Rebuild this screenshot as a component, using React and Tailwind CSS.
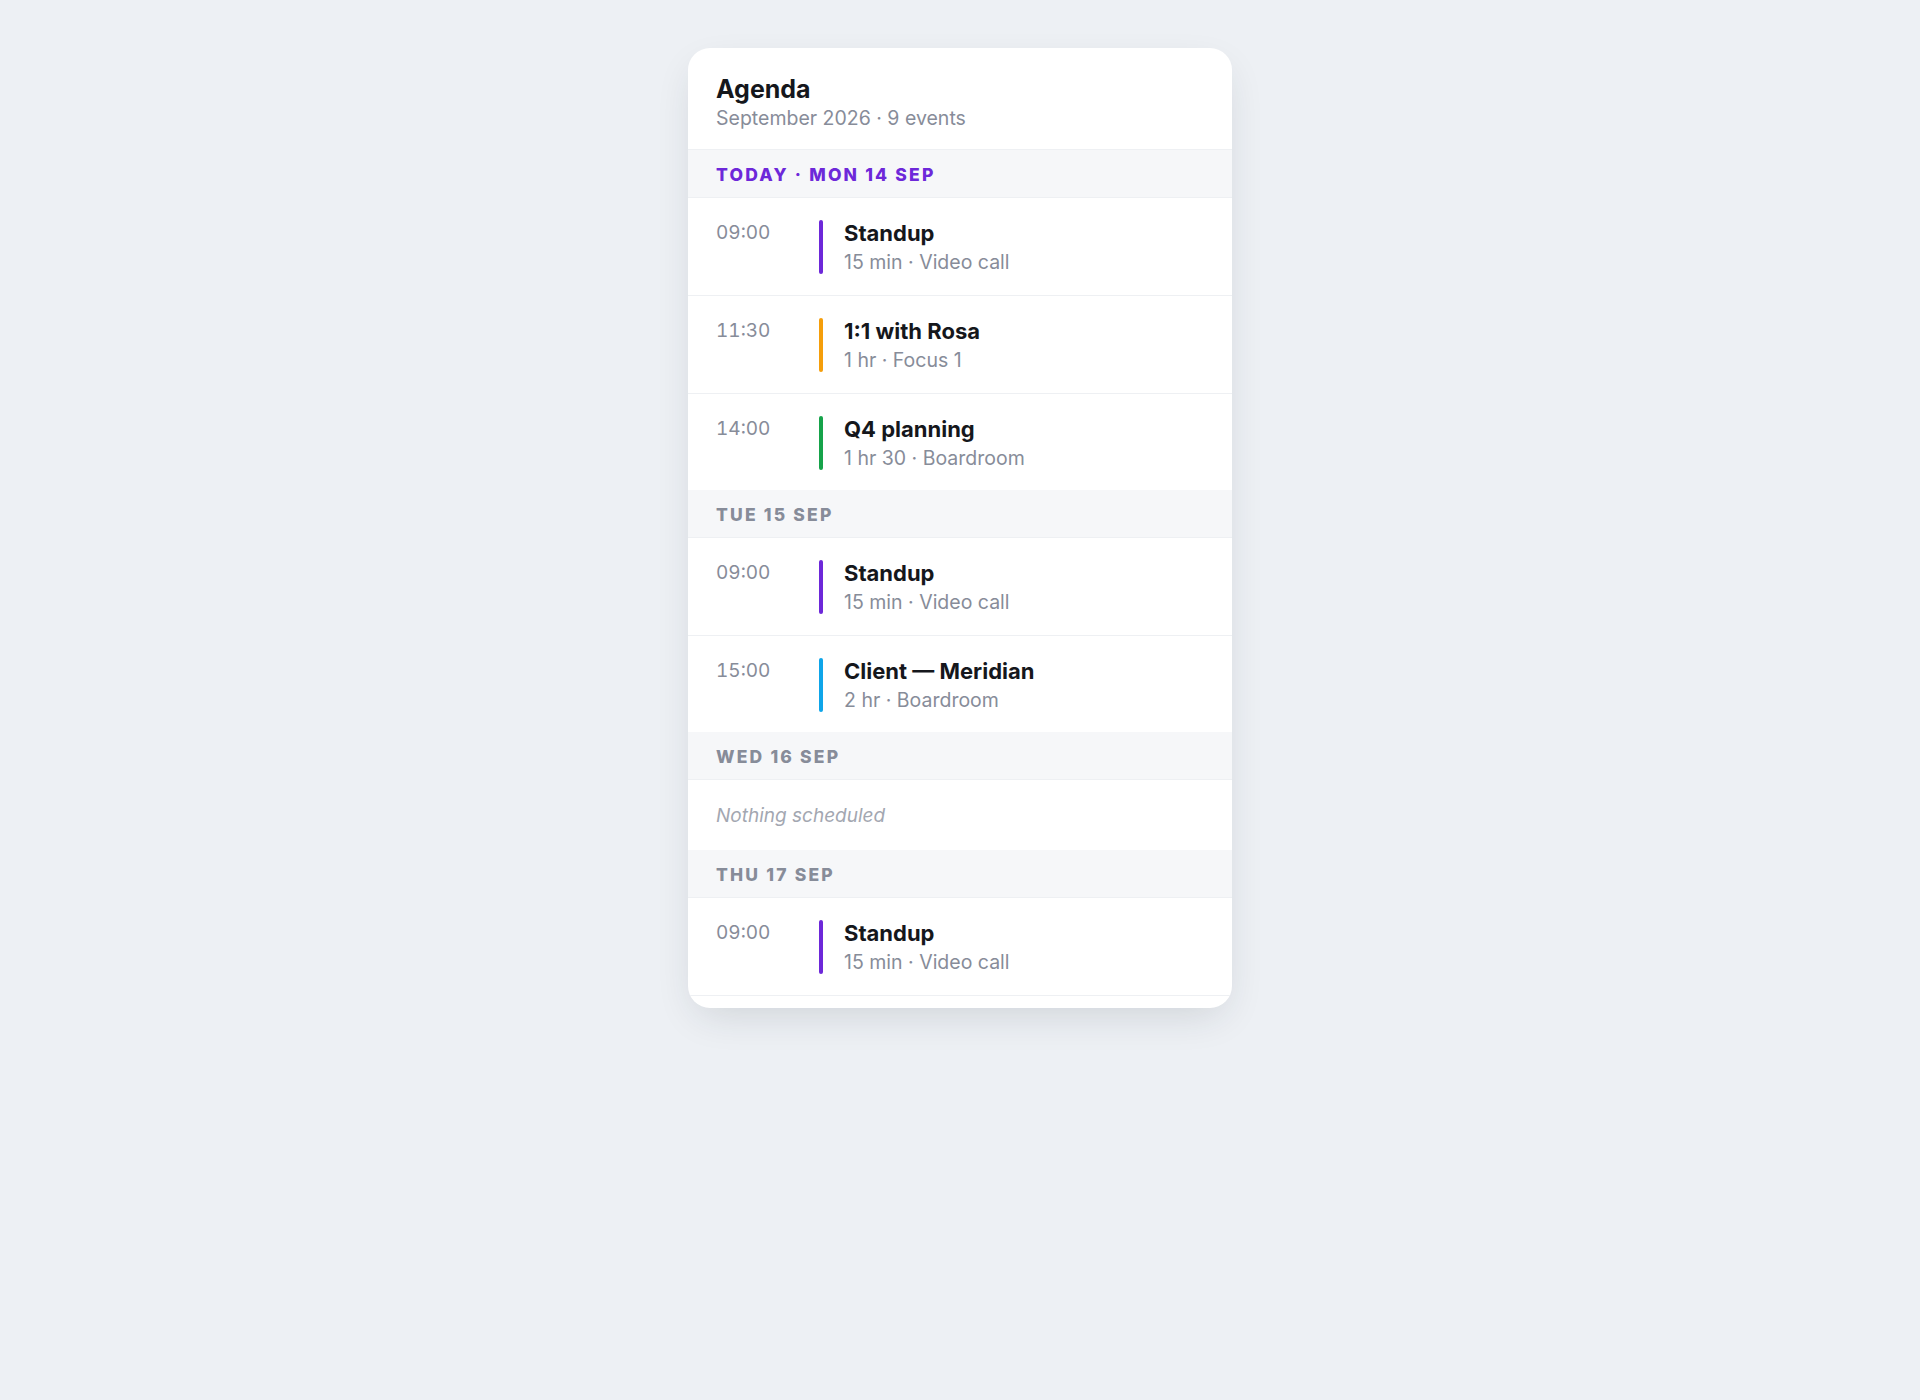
import React from 'react';

const days = [
  {
    label: 'Today · Mon 14 Sep',
    today: true,
    events: [
      { time: '09:00', title: 'Standup', meta: '15 min · Video call', bar: 'bg-[#6d28d9]' },
      { time: '11:30', title: '1:1 with Rosa', meta: '1 hr · Focus 1', bar: 'bg-[#f59e0b]' },
      { time: '14:00', title: 'Q4 planning', meta: '1 hr 30 · Boardroom', bar: 'bg-[#16a34a]' },
    ],
  },
  {
    label: 'Tue 15 Sep',
    events: [
      { time: '09:00', title: 'Standup', meta: '15 min · Video call', bar: 'bg-[#6d28d9]' },
      { time: '15:00', title: 'Client — Meridian', meta: '2 hr · Boardroom', bar: 'bg-[#0ea5e9]' },
    ],
  },
  { label: 'Wed 16 Sep', events: [] },
  {
    label: 'Thu 17 Sep',
    last: true,
    events: [
      { time: '09:00', title: 'Standup', meta: '15 min · Video call', bar: 'bg-[#6d28d9]' },
    ],
  },
];

const EventRow = ({ event, border }) => (
  <div
    className={`flex items-stretch px-7 pt-[22px] ${
      border ? 'pb-[21px] border-b border-[#eef0f3]' : 'pb-[20px]'
    }`}
  >
    <div className="w-[103px] shrink-0 text-[19px] leading-[26px] tabular-nums text-[#878c99]">
      {event.time}
    </div>
    <div className={`w-[4px] shrink-0 rounded-full ${event.bar}`} />
    <div className="ml-[21px] flex flex-col">
      <span className="text-[22px] leading-[26px] font-bold text-[#15171c]">{event.title}</span>
      <span className="pt-[5px] text-[19.5px] leading-[23px] text-[#878c99]">{event.meta}</span>
    </div>
  </div>
);

const DayHeader = ({ label, today }) => (
  <div className="h-[48px] flex items-center pt-[3px] px-7 bg-[#f6f7f9] border-b border-[#eef0f3]">
    <span
      className={`text-[17.5px] leading-[24px] font-extrabold uppercase tracking-[0.125em] ${
        today ? 'text-[#6d28d9]' : 'text-[#878c99]'
      }`}
    >
      {label}
    </span>
  </div>
);

export default function App() {
  return (
    <div className="min-h-[1400px] bg-[#edf0f4] flex justify-center pt-12 font-['Inter',sans-serif]">
      <div className="w-[544px] self-start bg-white rounded-[22px] overflow-hidden shadow-[0_14px_40px_-10px_rgba(30,41,59,0.16)] pb-3">
        <div className="px-7 pt-[25px] pb-[18px] border-b border-[#eef0f3]">
          <h1 className="text-[25px] leading-[32px] font-bold text-[#15171c]">Agenda</h1>
          <p className="text-[19.5px] leading-[26px] text-[#878c99]">September 2026 · 9 events</p>
        </div>

        {days.map((day) => (
          <div key={day.label}>
            <DayHeader label={day.label} today={day.today} />
            {day.events.length === 0 ? (
              <div className="px-7 pt-[22px] pb-[20px] text-[19px] leading-[28px] italic text-[#a3a7b1]">
                Nothing scheduled
              </div>
            ) : (
              day.events.map((ev, i) => (
                <EventRow
                  key={i}
                  event={ev}
                  border={day.last || i < day.events.length - 1}
                />
              ))
            )}
          </div>
        ))}
      </div>
    </div>
  );
}
